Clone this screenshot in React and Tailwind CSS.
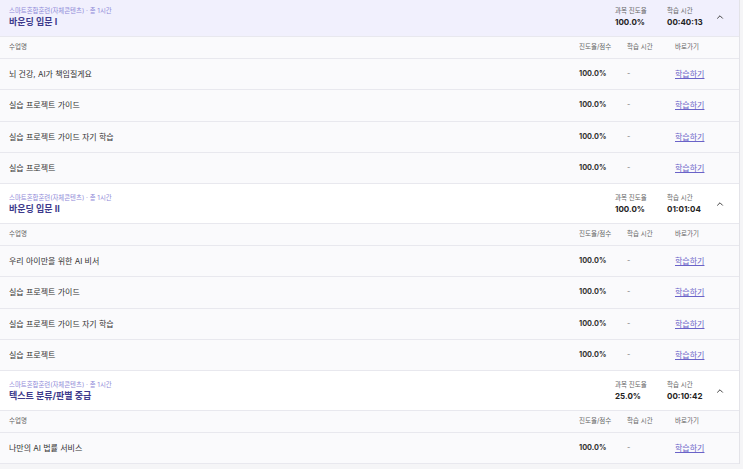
import React from 'react';

const FONT = { fontFamily: 'Inter, "Noto Sans CJK KR", "Noto Sans", sans-serif' };

const sections = [
  {
    title: '바운딩 입문 I',
    progress: '100.0%',
    time: '00:40:13',
    active: true,
    lessons: ['뇌 건강, AI가 책임질게요', '실습 프로젝트 가이드', '실습 프로젝트 가이드 자기 학습', '실습 프로젝트'],
  },
  {
    title: '바운딩 입문 II',
    progress: '100.0%',
    time: '01:01:04',
    lessons: ['우리 아이만을 위한 AI 비서', '실습 프로젝트 가이드', '실습 프로젝트 가이드 자기 학습', '실습 프로젝트'],
  },
  {
    title: '텍스트 분류/판별 중급',
    progress: '25.0%',
    time: '00:10:42',
    lessons: ['나만의 AI 법률 서비스'],
  },
];

function ChevronUp() {
  return (
    <svg width="10" height="10" viewBox="0 0 24 24" fill="none" stroke="#444" strokeWidth="2.4" strokeLinecap="round" strokeLinejoin="round">
      <path d="M6 15l6-6 6 6" />
    </svg>
  );
}

function Section({ section }) {
  return (
    <div>
      {/* course header */}
      <div className={`flex items-center h-[40px] pl-[9px] pr-[11px] border-b border-[#e8e8ee] ${section.active ? 'bg-[#f1f0fd]' : 'bg-white'}`}>
        <div className="flex-1">
          <div className="text-[6.4px] leading-[10px] text-[#8f89d8]">스마트혼합훈련(자체콘텐츠) · 총 1시간</div>
          <div className="text-[9px] leading-[12px] font-bold text-[#3d3a8c]">{section.title}</div>
        </div>
        <div className="w-[52px]">
          <div className="text-[6.5px] leading-[10px] text-[#666]">과목 진도율</div>
          <div className="text-[8px] leading-[12px] font-bold text-[#222]">{section.progress}</div>
        </div>
        <div className="w-[45px]">
          <div className="text-[6.5px] leading-[10px] text-[#666]">학습 시간</div>
          <div className="text-[8px] leading-[12px] font-bold text-[#222]">{section.time}</div>
        </div>
        <div className="w-[16px] flex justify-center">
          <ChevronUp />
        </div>
      </div>
      {/* column header */}
      <div className="grid grid-cols-[1fr_48px_48px_64px] items-center h-[22px] pl-[9px] bg-[#fafafc] border-b border-[#e8e8ee] text-[6.5px] leading-[9px] text-[#666]">
        <div>수업명</div>
        <div>진도율/점수</div>
        <div>학습 시간</div>
        <div>바로가기</div>
      </div>
      {section.lessons.map((name, i) => (
        <div key={i} className="grid grid-cols-[1fr_48px_48px_64px] items-center h-[31.25px] pl-[9px] bg-[#fafafc] border-b border-[#e8e8ee] leading-[12px]">
          <div className="text-[8px] text-[#333]">{name}</div>
          <div className="text-[7.3px] font-bold text-[#333]">100.0%</div>
          <div className="text-[7.3px] text-[#777]">-</div>
          <div className="text-[8px]">
            <a href="#" className="text-[#6a63c8] underline">학습하기</a>
          </div>
        </div>
      ))}
    </div>
  );
}

export default function App() {
  return (
    <div className="h-[469px] overflow-hidden bg-[#f5f5f7]" style={FONT}>
      <div className="w-[740px] -mt-[3px] bg-white border-r border-[#e3e3e8]">
        {sections.map((s, i) => (
          <Section key={i} section={s} />
        ))}
      </div>
    </div>
  );
}
